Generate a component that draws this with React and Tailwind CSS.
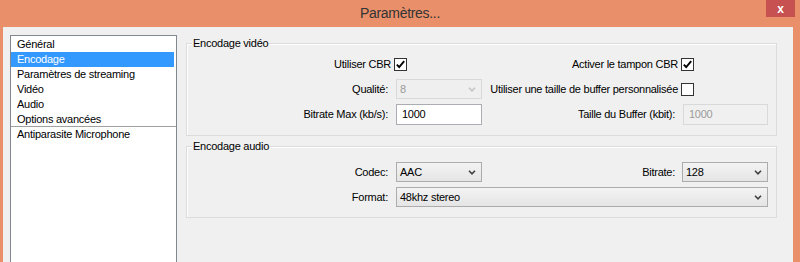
import clsx from 'clsx';

// Small chevron used by the combo boxes
function Chevron({ disabled }) {
  return (
    <svg width="8" height="5" viewBox="0 0 8 5" className={disabled ? 'text-[#c4c4c4]' : 'text-[#404040]'}>
      <path d="M1 0.8 L4 3.8 L7 0.8" fill="none" stroke="currentColor" strokeWidth="1.6" />
    </svg>
  );
}

function Combo({ value, className, disabled }) {
  return (
    <div
      className={clsx(
        'flex h-[20px] items-center justify-between border pl-[3px] pr-[5px]',
        disabled
          ? 'border-[#d9d9d9] bg-[#efefef] text-[#9a9a9a]'
          : 'border-[#acacac] bg-gradient-to-b from-[#f3f3f3] to-[#e5e5e5] text-black',
        className
      )}
    >
      <span>{value}</span>
      <Chevron disabled={disabled} />
    </div>
  );
}

function TextBox({ value, className, disabled }) {
  return (
    <div
      className={clsx(
        'flex h-[21px] items-center border pl-[5px]',
        disabled ? 'border-[#d9d9d9] bg-[#f0f0f0] text-[#9a9a9a]' : 'border-[#abadb3] bg-white text-black',
        className
      )}
    >
      {value}
    </div>
  );
}

function CheckBox({ checked }) {
  return (
    <div className="flex h-[13px] w-[13px] items-center justify-center border border-[#333] bg-white">
      {checked && (
        <svg width="11" height="11" viewBox="0 0 11 11">
          <path d="M1.8 5.6 L4.2 8 L9.2 2.2" fill="none" stroke="#000" strokeWidth="1.9" />
        </svg>
      )}
    </div>
  );
}

function GroupBox({ title, className, children }) {
  return (
    <div className={clsx('relative w-[591px] border border-[#dcdcdc] shadow-[inset_1px_1px_0_#fff]', className)}>
      <span className="absolute left-[5px] top-[-7px] bg-[#f0f0f0] px-[1px] leading-[13px]">{title}</span>
      {children}
    </div>
  );
}

const menuItems = ['Général', 'Encodage', 'Paramètres de streaming', 'Vidéo', 'Audio', 'Options avancées'];

export default function App() {
  return (
    <div className="h-[262px] w-[800px] overflow-hidden bg-[#e9906a] font-['Liberation_Sans',Arial,sans-serif] text-[11px] tracking-[-0.25px] text-black">
      {/* title bar */}
      <div className="relative flex h-[27px] items-center justify-center">
        <span className="text-[14px] tracking-[-0.3px] text-[#333]">Paramètres...</span>
        <div className="absolute right-[5px] top-0 flex h-[17px] w-[29px] items-center justify-center bg-[#c75050] text-[12px] font-bold text-white">
          x
        </div>
      </div>

      <div className="ml-[3px] mr-[7px] flex h-[235px] bg-[#f0f0f0]">
        {/* left menu */}
        <div className="ml-[7px] mt-[8px] h-[300px] w-[167px] shrink-0 border border-[#828790] bg-white pt-[1px]">
          {menuItems.map((item, i) => (
            <div
              key={item}
              className={clsx(
                'h-[15px] leading-[15px]',
                i === 5 && 'border-b border-[#a0a0a0]'
              )}
            >
              <div className={clsx('mr-[2px] h-[15px] pl-[6px]', i === 1 && 'bg-[#3399ff] text-white')}>{item}</div>
            </div>
          ))}
          <div className="h-[15px] pl-[6px] leading-[15px]">Antiparasite Microphone</div>
        </div>

        {/* settings */}
        <div className="ml-[9px] mt-[16px] flex flex-col">
          <GroupBox title="Encodage vidéo" className="h-[93px]">
            <div className="mt-[14px] flex h-[13px] items-center">
              <div className="flex w-[295px] items-center justify-end pr-[75px]">
                <span>Utiliser CBR</span>
                <div className="ml-[3px]"><CheckBox checked /></div>
              </div>
              <div className="flex flex-1 items-center justify-end pr-[82px]">
                <span>Activer le tampon CBR</span>
                <div className="ml-[3px]"><CheckBox checked /></div>
              </div>
            </div>
            <div className="mt-[8px] flex h-[20px] items-center">
              <div className="flex w-[295px] items-center justify-end">
                <span>Qualité:</span>
                <Combo value="8" disabled className="ml-[8px] w-[86px]" />
              </div>
              <div className="flex flex-1 items-center justify-end pr-[82px]">
                <span>Utiliser une taille de buffer personnalisée</span>
                <div className="ml-[3px]"><CheckBox /></div>
              </div>
            </div>
            <div className="mt-[5px] flex h-[21px] items-center">
              <div className="flex w-[295px] items-center justify-end">
                <span>Bitrate Max (kb/s):</span>
                <TextBox value="1000" className="ml-[8px] w-[86px]" />
              </div>
              <div className="flex flex-1 items-center justify-end pr-[8px]">
                <span>Taille du Buffer (kbit):</span>
                <TextBox value="1000" disabled className="ml-[8px] w-[85px]" />
              </div>
            </div>
          </GroupBox>

          <GroupBox title="Encodage audio" className="mt-[10px] h-[72px]">
            <div className="mt-[15px] flex h-[20px] items-center">
              <div className="flex w-[295px] items-center justify-end">
                <span>Codec:</span>
                <Combo value="AAC" className="ml-[8px] w-[86px]" />
              </div>
              <div className="flex flex-1 items-center justify-end pr-[8px]">
                <span>Bitrate:</span>
                <Combo value="128" className="ml-[7px] w-[86px]" />
              </div>
            </div>
            <div className="mt-[5px] flex h-[20px] items-center">
              <span className="w-[201px] text-right">Format:</span>
              <Combo value="48khz stereo" className="ml-[8px] w-[372px]" />
            </div>
          </GroupBox>
        </div>
      </div>
    </div>
  );
}
